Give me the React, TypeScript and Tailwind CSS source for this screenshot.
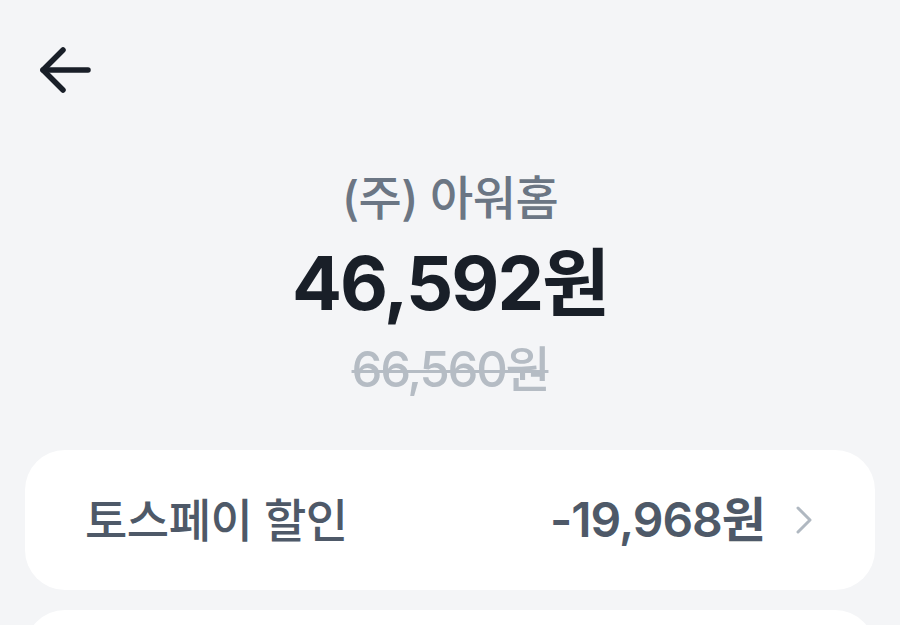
import { ReactNode } from 'react';

const font = { fontFamily: 'Inter, "Noto Sans CJK KR", sans-serif' };

function BackArrow() {
  return (
    <svg width="56" height="48" viewBox="0 0 56 48" fill="none" stroke="#191f28" strokeWidth="5.5" strokeLinecap="round" strokeLinejoin="round">
      <path d="M50 24H5" />
      <path d="M25 4L5 24L25 44" />
    </svg>
  );
}

function Chevron() {
  return (
    <svg width="18" height="30" viewBox="0 0 18 30" fill="none" stroke="#b0b8c1" strokeWidth="3" strokeLinecap="round" strokeLinejoin="round">
      <path d="M3 3L15 15L3 27" />
    </svg>
  );
}

function Card({ children }: { children?: ReactNode }) {
  return <div className="mx-[25px] rounded-[40px] bg-white">{children}</div>;
}

export default function App() {
  return (
    <div className="h-[625px] w-[900px] overflow-hidden bg-[#f4f5f7]" style={font}>
      <div className="flex h-[140px] items-center pl-[38px]">
        <BackArrow />
      </div>

      <div className="flex flex-col items-center">
        <div className="mt-[28px] text-[47px] font-medium leading-[60px] tracking-[-0.5px] text-[#6b7684]">(주) 아워홈</div>
        <div className="mt-[5px] text-[74px] font-bold leading-[100px] tracking-[-2px] text-[#191f28]">46,592원</div>
        <div className="mt-[7px] text-[49px] font-medium leading-[60px] tracking-[-2.2px] text-[#b5bcc4] line-through decoration-[3px]">66,560원</div>
      </div>

      <div className="mt-[50px] flex flex-col gap-[20px]">
        <Card>
          <div className="flex h-[140px] items-center pl-[60px] pr-[62px]">
            <span className="flex-1 text-[46px] font-medium tracking-[-0.5px] text-[#4e5968]">토스페이 할인</span>
            <span className="mr-[30px] text-[48px] font-semibold tracking-[-1px] text-[#4e5968]">-19,968원</span>
            <Chevron />
          </div>
        </Card>
        <Card>
          <div className="h-[140px]" />
        </Card>
      </div>
    </div>
  );
}
